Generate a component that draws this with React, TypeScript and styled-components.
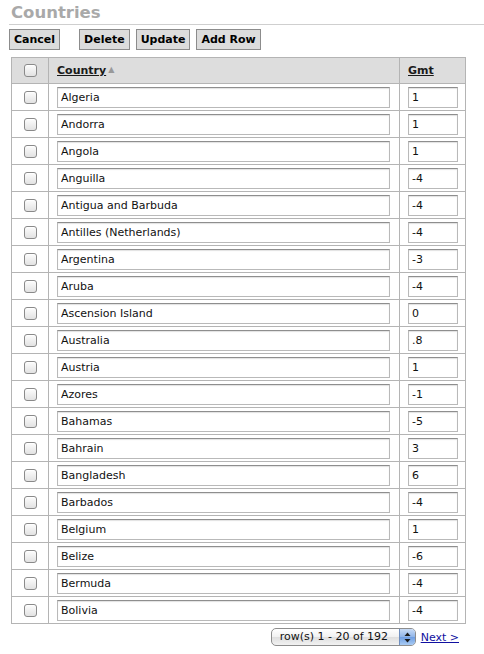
import styled, { createGlobalStyle } from 'styled-components';

const GlobalStyle = createGlobalStyle`
  body {
    margin: 0;
    background: #fff;
    font-family: "DejaVu Sans", Verdana, sans-serif;
  }
`;

const countries: [string, string][] = [
  ['Algeria', '1'],
  ['Andorra', '1'],
  ['Angola', '1'],
  ['Anguilla', '-4'],
  ['Antigua and Barbuda', '-4'],
  ['Antilles (Netherlands)', '-4'],
  ['Argentina', '-3'],
  ['Aruba', '-4'],
  ['Ascension Island', '0'],
  ['Australia', '.8'],
  ['Austria', '1'],
  ['Azores', '-1'],
  ['Bahamas', '-5'],
  ['Bahrain', '3'],
  ['Bangladesh', '6'],
  ['Barbados', '-4'],
  ['Belgium', '1'],
  ['Belize', '-6'],
  ['Bermuda', '-4'],
  ['Bolivia', '-4'],
];

const App = () => {
  return (
    <Page>
      <GlobalStyle />
      <Title>Countries</Title>
      <Toolbar>
        <Button>Cancel</Button>
        <Button $gap>Delete</Button>
        <Button>Update</Button>
        <Button>Add Row</Button>
      </Toolbar>
      <Grid>
        <colgroup>
          <col style={{ width: 37 }} />
          <col style={{ width: 351 }} />
          <col style={{ width: 66 }} />
        </colgroup>
        <thead>
          <tr>
            <HeadCell $center>
              <Check />
            </HeadCell>
            <HeadCell>
              <SortLink>Country</SortLink>
              <SortArrow>▲</SortArrow>
            </HeadCell>
            <HeadCell>
              <SortLink>Gmt</SortLink>
            </HeadCell>
          </tr>
        </thead>
        <tbody>
          {countries.map(([name, gmt]) => (
            <tr key={name}>
              <CheckCell>
                <Check />
              </CheckCell>
              <Cell>
                <Field $w={333} defaultValue={name} />
              </Cell>
              <Cell>
                <Field $w={50} defaultValue={gmt} />
              </Cell>
            </tr>
          ))}
        </tbody>
      </Grid>
      <Pager>
        <Select>
          <SelectText>row(s) 1 - 20 of 192</SelectText>
          <SelectArrows>
            <svg width="7" height="11" viewBox="0 0 7 11">
              <path d="M3.5 0.5 L6.5 4 L0.5 4 Z" fill="#1a1a1a" />
              <path d="M3.5 10.5 L6.5 7 L0.5 7 Z" fill="#1a1a1a" />
            </svg>
          </SelectArrows>
        </Select>
        <NextLink>Next &gt;</NextLink>
      </Pager>
    </Page>
  );
};

export default App;

const Page = styled.div`
  width: 484px;
  padding: 0 0 0 9px;
  box-sizing: border-box;
`;

const Title = styled.h1`
  margin: 0;
  padding: 2px 0 0 2px;
  height: 22px;
  font-size: 16.5px;
  line-height: 22px;
  font-weight: bold;
  color: #a9a9a9;
  border-bottom: 1px solid #cfcfcf;
`;

const Toolbar = styled.div`
  display: flex;
  gap: 6px;
  margin-top: 4px;
`;

const Button = styled.button<{ $gap?: boolean }>`
  height: 21px;
  padding: 0 4px;
  margin-left: ${(p) => (p.$gap ? '13px' : '0')};
  background: #dcdcdc;
  border: 1px solid #8c8c8c;
  border-radius: 0;
  font-family: "DejaVu Sans", Verdana, sans-serif;
  font-size: 11px;
  font-weight: bold;
  color: #000;
`;

const Grid = styled.table`
  margin: 7px 0 0 2px;
  width: 454px;
  table-layout: fixed;
  border-collapse: collapse;
  border: 1px solid #a8a8a8;
  font-size: 11px;
`;

const HeadCell = styled.th<{ $center?: boolean }>`
  height: 25px;
  padding: ${(p) => (p.$center ? '0' : '0 8px')};
  background: #dddddd;
  border: 1px solid #b4b4b4;
  text-align: ${(p) => (p.$center ? 'center' : 'left')};
`;

const SortLink = styled.a`
  font-weight: bold;
  color: #1a1a1a;
  text-decoration: underline;
  font-size: 11px;
`;

const SortArrow = styled.span`
  margin-left: 2px;
  font-size: 8px;
  color: #999;
  vertical-align: 2px;
`;

const CheckCell = styled.td`
  height: 26px;
  padding: 0;
  text-align: center;
  border: 1px solid #b4b4b4;
`;

const Cell = styled.td`
  height: 26px;
  padding: 0 8px;
  border: 1px solid #b4b4b4;
`;

const Check = styled.span`
  display: inline-block;
  width: 11px;
  height: 11px;
  border: 1px solid #8a8a8a;
  border-radius: 3px;
  background: linear-gradient(#fdfdfd, #e2e2e2);
  box-shadow: inset 0 1px 0 #fff;
  vertical-align: middle;
`;

const Field = styled.input<{ $w: number }>`
  display: block;
  box-sizing: border-box;
  width: ${(p) => p.$w}px;
  height: 21px;
  padding: 0 3px;
  border: 1px solid #b9b9b9;
  border-top-color: #8e8e8e;
  box-shadow: inset 0 1px 1px rgba(0, 0, 0, 0.12);
  font-family: "DejaVu Sans", Verdana, sans-serif;
  font-size: 11px;
  color: #111;
  outline: none;
`;

const Pager = styled.div`
  display: flex;
  justify-content: flex-end;
  align-items: center;
  gap: 5px;
  width: 450px;
  margin-top: 4px;
`;

const Select = styled.div`
  display: flex;
  align-items: stretch;
  width: 145px;
  height: 18px;
  box-sizing: border-box;
  border: 1px solid #8d8d8d;
  border-radius: 5px;
  background: linear-gradient(#ffffff, #f1f1f1 50%, #dedede 51%, #f2f2f2);
  overflow: hidden;
`;

const SelectText = styled.span`
  flex: 1;
  padding-left: 8px;
  font-size: 11px;
  line-height: 16px;
  color: #111;
  white-space: nowrap;
`;

const SelectArrows = styled.span`
  width: 15px;
  display: flex;
  align-items: center;
  justify-content: center;
  border-left: 1px solid #6f8fbf;
  background: linear-gradient(#c9dcf6, #8fb4e8 50%, #6d9de2 51%, #a9cbf3);
`;

const NextLink = styled.a`
  font-size: 11px;
  color: #1010a0;
  text-decoration: underline;
  cursor: pointer;
`;
